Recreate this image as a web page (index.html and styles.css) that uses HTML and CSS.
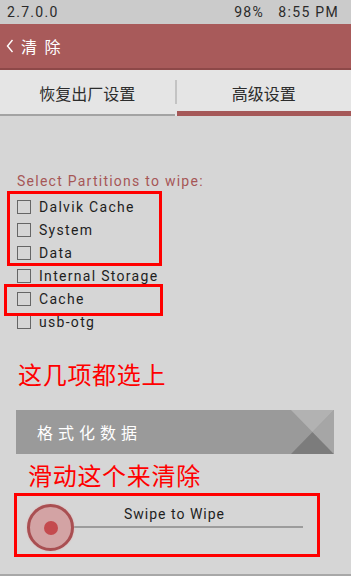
FILE: index.html
```html
<!DOCTYPE html>
<html>
<head>
<meta charset="utf-8">
<link rel="stylesheet" href="styles.css">
</head>
<body>
<div class="screen">
  <div class="status">
    <span>2.7.0.0</span>
    <span class="status-right">98%&nbsp;&nbsp;&nbsp;8:55 PM</span>
  </div>
  <div class="header">
    <svg class="back" width="8" height="14" viewBox="0 0 8 14"><polyline points="6.5,1 1.5,7 6.5,13" fill="none" stroke="#fff" stroke-width="1.4"/></svg>
    <span class="title">清 除</span>
  </div>
  <div class="tabs">
    <div class="tab">恢复出厂设置</div>
    <div class="tab-sep"></div>
    <div class="tab active">高级设置</div>
  </div>
  <div class="content">
    <div class="section-title">Select Partitions to wipe:</div>
    <div class="list">
      <div class="anno anno1"></div>
      <div class="anno anno2"></div>
      <div class="row"><span class="cb"></span>Dalvik Cache</div>
      <div class="row"><span class="cb"></span>System</div>
      <div class="row"><span class="cb"></span>Data</div>
      <div class="row"><span class="cb"></span>Internal Storage</div>
      <div class="row"><span class="cb"></span>Cache</div>
      <div class="row"><span class="cb"></span>usb-otg</div>
    </div>
    <div class="note note1">这几项都选上</div>
    <div class="btn">
      <span class="btn-text">格式化数据</span>
      <svg class="btn-deco" width="43" height="44" viewBox="0 0 43 44">
        <polygon points="0,0 43,0 21.5,22" fill="#b2b2b2"/>
        <polygon points="0,44 43,44 21.5,22" fill="#7c7c7c"/>
        <polygon points="43,0 43,44 21.5,22" fill="#a6a6a6"/>
      </svg>
    </div>
    <div class="note note2">滑动这个来清除</div>
    <div class="swipe-box">
      <div class="swipe">
        <div class="track"></div>
        <div class="knob"><div class="dot"></div></div>
        <div class="swipe-label">Swipe to Wipe</div>
      </div>
    </div>
  </div>
</div>
</body>
</html>
```
FILE: styles.css
```css
* { box-sizing: border-box; }
html, body { margin: 0; padding: 0; }
body {
  width: 351px;
  height: 576px;
  overflow: hidden;
  background: #d6d6d6;
  font-family: Roboto, "Noto Sans", "Noto Sans CJK SC", sans-serif;
}
.screen { width: 351px; height: 576px; display: flex; flex-direction: column; border-bottom: 2px solid #a8a8a8; }
.status {
  height: 24px;
  background: #cbcbcb;
  display: flex;
  justify-content: space-between;
  align-items: center;
  padding: 0 12px 0 7px;
  font-size: 14px;
  letter-spacing: 1.3px;
  color: #2a2a2a;
}
.header {
  height: 46px;
  background: #a85a5a;
  border-bottom: 2px solid #8d4848;
  display: flex;
  align-items: center;
  padding-left: 6px;
  color: #fff;
  font-family: "Noto Sans CJK SC", sans-serif;
  font-size: 16px;
}
.back { display: block; margin-right: 7px; }
.title { letter-spacing: 2px; }
.tabs {
  height: 46px;
  background: #e5e5e5;
  display: flex;
  align-items: center;
  font-family: "Noto Sans CJK SC", sans-serif;
  font-size: 16px;
  color: #2c2c2c;
}
.tab {
  flex: 1;
  height: 100%;
  display: flex;
  align-items: center;
  justify-content: center;
  padding-top: 2px;
  border-bottom: 2px solid #a3a3a3;
}
.tab.active { border-bottom: 5px solid #a55858; padding-top: 5px; }
.tab-sep { width: 2px; height: 24px; background: #c3c3c3; margin-top: -2px; }
.content { flex: 1; padding-top: 57px; display: flex; flex-direction: column; }
.section-title {
  padding-left: 17px;
  font-size: 14px;
  letter-spacing: 1.25px;
  color: #a65656;
  line-height: 17px;
}
.list { position: relative; padding-top: 5px; }
.row {
  height: 23px;
  display: flex;
  align-items: center;
  padding-left: 17px;
  font-size: 14px;
  letter-spacing: 1.3px;
  color: #1e1e1e;
}
.cb {
  width: 14px;
  height: 14px;
  border: 1px solid #666;
  margin-right: 8px;
  flex: none;
}
.anno { position: absolute; border: 3px solid #ff0000; }
.anno1 { left: 7px; top: 1px; width: 155px; height: 75px; }
.anno2 { left: 4px; top: 94px; width: 159px; height: 32px; }
.note {
  color: #ff0000;
  font-family: "Noto Sans CJK SC", sans-serif;
  font-size: 24px;
  line-height: 28px;
  letter-spacing: 0.7px;
}
.note1 { padding-left: 18px; margin-top: 27px; }
.note2 { padding-left: 28px; margin-top: 7px; }
.btn {
  margin: 22px 17px 0 16px;
  height: 44px;
  background: #9a9a9a;
  display: flex;
  align-items: center;
  justify-content: space-between;
  color: #fff;
  font-family: "Noto Sans CJK SC", sans-serif;
  font-size: 16px;
}
.btn-text { padding-left: 21px; letter-spacing: 5px; }
.btn-deco { display: block; }
.swipe-box {
  margin: 4px 0 0 14px;
  width: 306px;
  height: 64px;
  border: 3px solid #ff0000;
  padding: 8px 0 0 10px;
}
.swipe { position: relative; width: 290px; height: 47px; }
.track {
  position: absolute;
  left: 24px;
  top: 22px;
  width: 252px;
  height: 2px;
  background: #9c9c9c;
}
.knob {
  position: absolute;
  left: 0;
  top: 0;
  width: 47px;
  height: 47px;
  border-radius: 50%;
  border: 3px solid #a94f52;
  background: #d3a3a4;
  box-shadow: 0 0 2px #e0b0b0;
  display: flex;
  align-items: center;
  justify-content: center;
}
.dot { width: 14px; height: 14px; border-radius: 50%; background: #c44a4e; }
.swipe-label {
  position: absolute;
  left: 97px;
  top: 2px;
  font-size: 14px;
  letter-spacing: 1px;
  color: #1e1e1e;
}
```
